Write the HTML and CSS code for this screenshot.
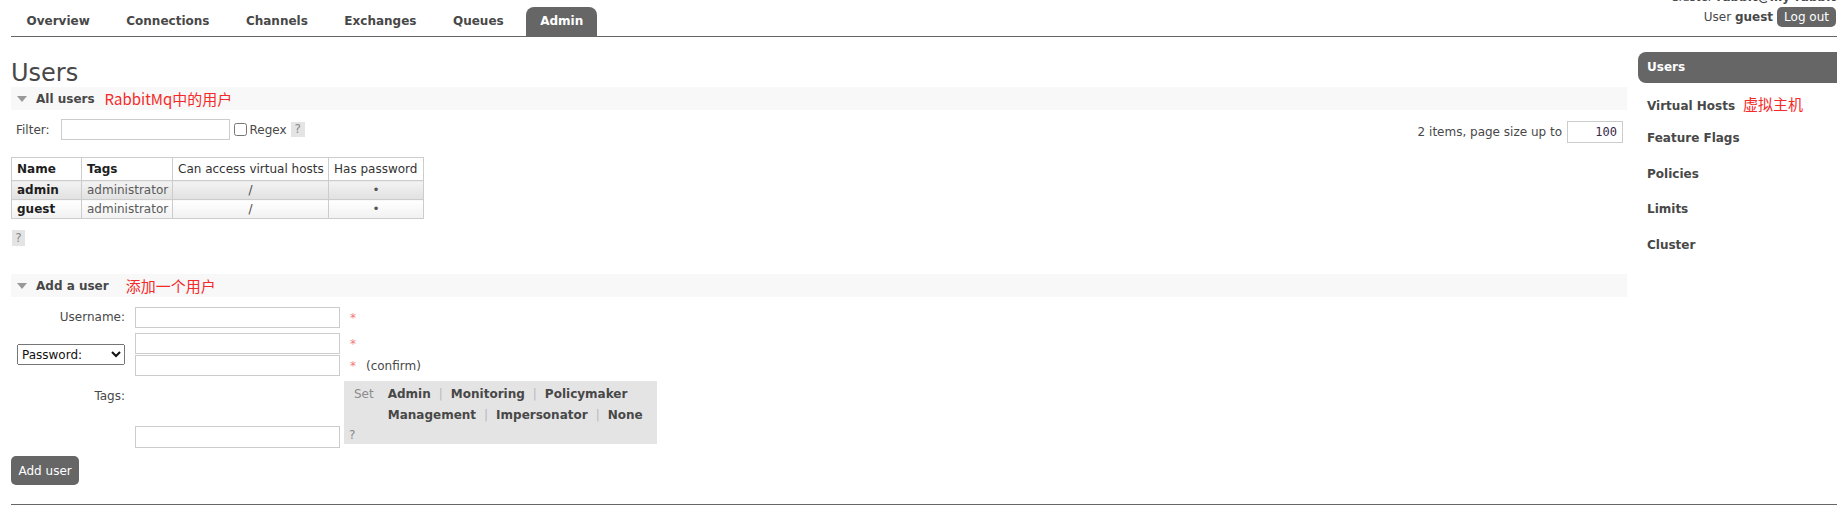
FILE: index.html
```html
<!DOCTYPE html>
<html lang="en">
<head>
<meta charset="utf-8">
<title>RabbitMQ Management - Users</title>
<link rel="stylesheet" href="styles.css">
</head>
<body>
<div class="page">
  <header class="header">
    <nav class="tabs">
      <a class="tab" href="#">Overview</a>
      <a class="tab" href="#">Connections</a>
      <a class="tab" href="#">Channels</a>
      <a class="tab" href="#">Exchanges</a>
      <a class="tab" href="#">Queues</a>
      <a class="tab active" href="#">Admin</a>
    </nav>
    <div class="login">
      <div class="cluster">Cluster <b>rabbit@my-rabbit</b></div>
      <div class="user-line"><span>User <b>guest</b></span><button class="logout">Log out</button></div>
    </div>
  </header>

  <div class="layout">
    <main class="main">
      <h1>Users</h1>

      <section>
        <h2 class="bar"><span class="tri"></span>All users<span class="note note1">RabbitMq中的用户</span></h2>
        <div class="filter-row">
          <div class="filter-left">
            <label class="filter-label">Filter:</label>
            <input class="filter-input" type="text">
            <input class="regex" type="checkbox">
            <span>Regex</span>
            <span class="help">?</span>
          </div>
          <div class="filter-right">
            <span>2 items, page size up to</span>
            <input class="page-size" type="text" value="100">
          </div>
        </div>

        <table class="list">
          <colgroup>
            <col class="col1"><col class="col2"><col class="col3"><col class="col4">
          </colgroup>
          <thead>
            <tr><th class="b">Name</th><th class="b">Tags</th><th>Can access virtual hosts</th><th>Has password</th></tr>
          </thead>
          <tbody>
            <tr class="alt1"><td class="name">admin</td><td class="tagcell">administrator</td><td class="c">/</td><td class="c dot">&#8226;</td></tr>
            <tr class="alt2"><td class="name">guest</td><td class="tagcell">administrator</td><td class="c">/</td><td class="c dot">&#8226;</td></tr>
          </tbody>
        </table>
        <span class="help help-block">?</span>
      </section>

      <section class="add-section">
        <h2 class="bar"><span class="tri"></span>Add a user<span class="note note2">添加一个用户</span></h2>
        <div class="form">
          <label class="lbl">Username:</label>
          <div class="field">
            <div class="field-line"><input class="text-input" type="text"><span class="req">*</span></div>
          </div>

          <select class="pw-select"><option>Password:</option><option>Hashed password:</option></select>
          <div class="field pw-field">
            <div class="field-line"><input class="text-input" type="password"><span class="req">*</span></div>
            <div class="field-line"><input class="text-input" type="password"><span class="req">*</span><span class="confirm">(confirm)</span></div>
          </div>

          <label class="lbl tags-lbl">Tags:</label>
          <div class="tags-field">
            <input class="text-input tags-input" type="text">
            <div class="tagbox">
              <span class="set">Set</span>
              <span class="links"><span class="lk">Admin</span><span class="sep">|</span><span class="lk">Monitoring</span><span class="sep">|</span><span class="lk">Policymaker</span></span>
              <span class="links row2"><span class="lk">Management</span><span class="sep">|</span><span class="lk">Impersonator</span><span class="sep">|</span><span class="lk">None</span></span>
              <span class="taghelp">?</span>
            </div>
          </div>
        </div>
        <button class="add">Add user</button>
      </section>
    </main>

    <aside class="rhs">
      <a class="sel" href="#">Users</a>
      <a href="#">Virtual Hosts<span class="note note3">虚拟主机</span></a>
      <a href="#">Feature Flags</a>
      <a href="#">Policies</a>
      <a href="#">Limits</a>
      <a href="#">Cluster</a>
    </aside>
  </div>

  <footer class="footer"></footer>
</div>
</body>
</html>
```

FILE: styles.css
```css
* { box-sizing: border-box; }

html, body {
  margin: 0;
  padding: 0;
  background: #fff;
}

body {
  font-family: "DejaVu Sans", Verdana, sans-serif;
  font-size: 12px;
  line-height: 14px;
  color: #484848;
  overflow: hidden;
}

.page {
  padding: 0 5px 0 11px;
}

/* ---------- header ---------- */
.header {
  display: flex;
  justify-content: space-between;
  align-items: flex-end;
  height: 37px;
  border-bottom: 1px solid #666;
}

.tabs {
  display: flex;
  gap: 8.5px;
  margin-left: 1.5px;
}

.tab {
  display: block;
  height: 29px;
  line-height: 29px;
  padding: 0 14px;
  font-weight: bold;
  color: #484848;
  text-decoration: none;
  border-radius: 8px 8px 0 0;
}

.tab.active {
  background: #666;
  color: #fff;
}

.login {
  align-self: flex-start;
  text-align: right;
  margin-right: 1px;
}

.cluster {
  margin-top: -10px;
  line-height: 14px;
  white-space: nowrap;
}

.user-line {
  display: flex;
  align-items: center;
  justify-content: flex-end;
  margin-top: 3px;
}

.logout {
  margin-left: 4px;
  height: 20px;
  line-height: 20px;
  padding: 0 7px;
  border: 0;
  border-radius: 5px;
  background: #666;
  color: #fff;
  font: inherit;
}

/* ---------- layout ---------- */
.layout {
  display: flex;
  align-items: flex-start;
  gap: 11px;
}

.main {
  flex: 1;
  min-width: 0;
}

h1 {
  margin: 22px 0 0;
  font-size: 24px;
  line-height: 28px;
  font-weight: normal;
  color: #484848;
}

.bar {
  display: flex;
  align-items: center;
  margin: 0;
  height: 23px;
  padding-left: 6px;
  background: #f8f8f8;
  font-size: 12px;
  font-weight: bold;
  color: #484848;
}

.tri {
  width: 0;
  height: 0;
  border-left: 5px solid transparent;
  border-right: 5px solid transparent;
  border-top: 6px solid #999;
  margin-right: 9px;
}

.note {
  font-family: "Noto Sans CJK SC", "DejaVu Sans", sans-serif;
  font-size: 15px;
  font-weight: normal;
  color: #f42a2a;
}

.note1 { margin-left: 10px; }
.note2 { margin-left: 17px; }
.note3 { margin-left: 8px; }

/* ---------- filter ---------- */
.filter-row {
  display: flex;
  justify-content: space-between;
  align-items: flex-start;
  margin-top: 9px;
}

.filter-left {
  display: flex;
  align-items: center;
  height: 21px;
  padding-left: 5px;
}

.filter-label {
  margin-right: 11px;
}

.filter-input {
  width: 169px;
  height: 21px;
  border: 1px solid #ccc;
  padding: 0 3px;
  font: inherit;
}

.regex {
  width: 13px;
  height: 13px;
  margin: 0 3px 0 4px;
}

.help {
  display: inline-block;
  width: 14px;
  height: 15px;
  line-height: 15px;
  text-align: center;
  background: #e4e4e4;
  color: #888;
  margin-left: 4px;
}

.filter-right {
  display: flex;
  align-items: center;
  margin-top: 2px;
}

.page-size {
  width: 56px;
  height: 22px;
  margin: 0 4px 0 5px;
  border: 1px solid #ccc;
  padding: 0 5px 0 2px;
  text-align: right;
  font-family: "DejaVu Sans Mono", monospace;
  font-size: 12px;
  color: #3a2848;
}

/* ---------- table ---------- */
.list {
  border-collapse: collapse;
  table-layout: fixed;
  width: 412px;
  margin-top: 14px;
}

.col1 { width: 70px; }
.col2 { width: 91px; }
.col3 { width: 156px; }
.col4 { width: 95px; }

.list th,
.list td {
  border: 1px solid #ccc;
  padding: 0 5px;
  text-align: left;
  white-space: nowrap;
  overflow: hidden;
}

.list th {
  height: 23px;
  font-weight: normal;
  color: #333;
  background: #fff;
}

.list th.b {
  font-weight: bold;
  color: #1e1e1e;
}

.list td {
  height: 19px;
}

.list td.c {
  text-align: center;
}

.list tr.alt1 td {
  background: linear-gradient(#f3f3f3, #e1e1e1);
}

.list tr.alt2 td {
  background: linear-gradient(#ffffff, #f1f1f1);
}

.name {
  font-weight: bold;
  color: #1e1e1e;
}

.tagcell {
  color: #5a5a5a;
}

.dot {
  color: #555;
}

.help-block {
  display: block;
  width: 13px;
  height: 16px;
  line-height: 16px;
  margin: 11px 0 0 1px;
}

/* ---------- add user ---------- */
.add-section {
  margin-top: 28px;
}

.form {
  display: grid;
  grid-template-columns: 114px auto;
  column-gap: 10px;
  row-gap: 5px;
  align-items: start;
  margin-top: 10px;
}

.lbl {
  text-align: right;
  line-height: 21px;
}

.tags-lbl {
  line-height: 14px;
  padding-top: 8px;
}

.pw-select {
  justify-self: end;
  align-self: center;
  width: 108px;
  height: 21px;
  font: inherit;
  color: #111;
  margin: 0;
}

.field {
  display: flex;
  flex-direction: column;
  gap: 1px;
}

.field-line {
  display: flex;
  align-items: center;
}

.text-input {
  width: 205px;
  height: 21px;
  border: 1px solid #ccc;
  padding: 0 3px;
  font: inherit;
  margin: 0;
}

.req {
  color: #f47878;
  margin-left: 10px;
}

.confirm {
  margin-left: 10px;
}

.tags-field {
  display: flex;
  align-items: flex-start;
}

.tags-input {
  margin-top: 45px;
  height: 22px;
}

.tagbox {
  display: grid;
  grid-template-columns: auto auto;
  grid-template-rows: 21px 21px 18px;
  column-gap: 14px;
  justify-content: start;
  align-content: start;
  width: 313px;
  height: 63px;
  margin-left: 4px;
  padding: 3px 0 0 5px;
  background: #e4e4e4;
  line-height: 21px;
}

.set {
  padding-left: 5px;
  color: #8c8c8c;
}

.links {
  grid-column: 2;
  white-space: nowrap;
}

.links.row2 {
  grid-row: 2;
}

.lk {
  font-weight: bold;
  color: #484848;
}

.sep {
  margin: 0 8px;
  color: #b8b8c0;
}

.taghelp {
  grid-column: 1;
  grid-row: 3;
  line-height: 18px;
  color: #888;
}

.add {
  display: block;
  margin-top: 8px;
  height: 29px;
  padding: 0 7.5px;
  border: 0;
  border-radius: 5px;
  background: #666;
  color: #fff;
  font: inherit;
}

/* ---------- right-hand menu ---------- */
.rhs {
  width: 199px;
  margin-top: 15px;
  display: flex;
  flex-direction: column;
  gap: 4.5px;
}

.rhs a {
  display: block;
  height: 31px;
  line-height: 31px;
  padding-left: 9px;
  font-weight: bold;
  color: #484848;
  text-decoration: none;
  border-radius: 8px 0 0 8px;
  white-space: nowrap;
}

.rhs a.sel {
  background: #666;
  color: #fff;
}

/* ---------- footer ---------- */
.footer {
  margin-top: 19px;
  border-top: 1px solid #666;
}
```
